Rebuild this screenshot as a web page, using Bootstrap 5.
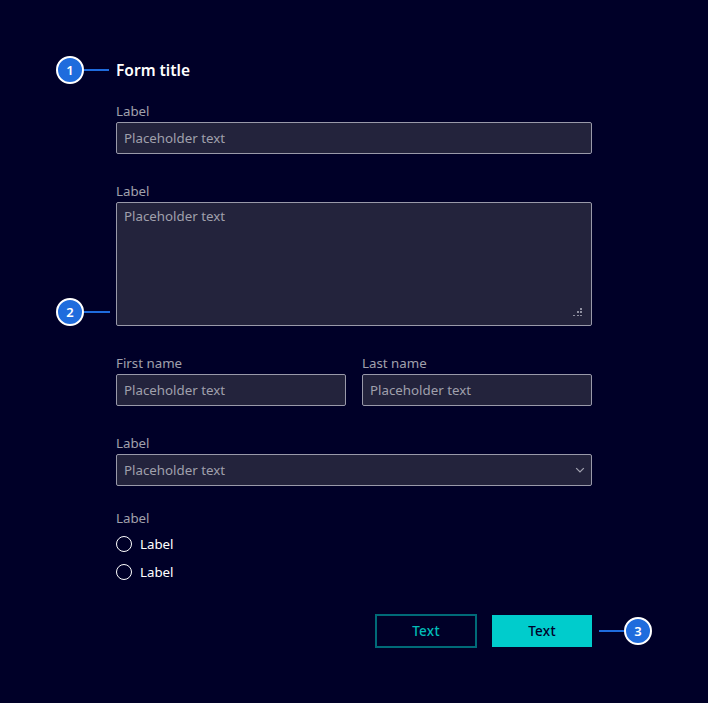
<!DOCTYPE html>
<html lang="en">
<head>
<meta charset="utf-8">
<meta name="viewport" content="width=device-width, initial-scale=1">
<title>Form</title>
<link href="https://cdn.jsdelivr.net/npm/bootstrap@5.3.0/dist/css/bootstrap.min.css" rel="stylesheet">
<style>
body{background:#000028;color:#fff;font-family:"Noto Sans",sans-serif;font-size:13.3px;line-height:18px;overflow:hidden}
.sheet{width:476px;margin-left:116px;padding-top:58px}
.form-heading{font-size:15.5px;line-height:24px;font-weight:600;letter-spacing:0;margin-bottom:20px}
.fields{gap:28px}
.form-label{display:block;color:#a0a0ac;margin-bottom:2px;line-height:18px}
.form-control,.form-select{background-color:#23233c;border:1px solid #9999a9;border-radius:2px;color:#a0a0ac;font-size:13.3px;line-height:18px;padding:6px 7px;height:32px}
.form-control::placeholder{color:#a0a0ac;opacity:1}
textarea.form-control{height:124px;resize:none;padding-top:4px;display:block}
.form-select{background-image:none;padding-left:7px}
.grip{right:10px;bottom:9px;pointer-events:none}
.chevron{right:7px;bottom:11px;pointer-events:none}
.choices{margin-top:23px}
.choices .form-label{margin-bottom:3px}
.choice{height:28px;gap:8px}
.choice .form-check-input{width:16px;height:16px;margin:0;background-color:transparent;border:1px solid #fff}
.actions{margin-top:28px;gap:15px}
.actions .btn{border-radius:0;font-size:13.5px;font-weight:500;line-height:18px;padding:0;letter-spacing:.25px}
.btn-line{width:102px;height:34px;border:2px solid #006a78;color:#00bdb8}
.btn-fill{width:100px;height:32px;border:0;background:#00cccc;color:#000028}
.callout{left:-60px;top:50%;transform:translateY(-50%)}
.callout-title{top:12px}
.callout-num{width:28px;height:28px;border:2px solid #fff;background:#1f6cdd;font-size:13px;font-weight:600;line-height:18px}
.callout-line{width:25px;height:2px;background:#1f6cdd}
.callout-area{top:110px}
.callout-area .callout-line{width:26px}
.callout-end{left:auto;right:-60px}
</style>
<script src="https://cdn.jsdelivr.net/npm/bootstrap@5.3.0/dist/js/bootstrap.bundle.min.js"></script>
</head>
<body>
<form class="sheet">
  <div class="position-relative">
    <h1 class="form-heading">Form title</h1>
    <div class="callout callout-title position-absolute d-flex align-items-center"><span class="callout-num rounded-circle d-flex align-items-center justify-content-center">1</span><span class="callout-line"></span></div>
  </div>
  <div class="fields d-flex flex-column">
    <div><label class="form-label" for="f1">Label</label><input id="f1" class="form-control" placeholder="Placeholder text"></div>
    <div>
      <label class="form-label" for="f2">Label</label>
      <div class="position-relative">
        <textarea id="f2" class="form-control" placeholder="Placeholder text"></textarea>
        <svg class="grip position-absolute" width="9" height="9" viewBox="0 0 9 9" fill="#9090a0" shape-rendering="crispEdges"><path d="M7 0h2v2H7zM7 3h2v2H7zM7 7h2v1H7zM4 3h2v2H4zM4 7h2v1H4zM0 7h2v1H0z"/></svg>
        <div class="callout callout-area position-absolute d-flex align-items-center"><span class="callout-num rounded-circle d-flex align-items-center justify-content-center">2</span><span class="callout-line"></span></div>
      </div>
    </div>
    <div class="row gx-3">
      <div class="col-6"><label class="form-label" for="f3">First name</label><input id="f3" class="form-control" placeholder="Placeholder text"></div>
      <div class="col-6"><label class="form-label" for="f4">Last name</label><input id="f4" class="form-control" placeholder="Placeholder text"></div>
    </div>
    <div class="position-relative">
      <label class="form-label" for="f5">Label</label>
      <select id="f5" class="form-select"><option>Placeholder text</option></select>
      <svg class="chevron position-absolute" width="10" height="10" viewBox="0 0 10 10" fill="none" stroke="#a0a0ae" stroke-width="1.3"><path d="M1.2 3.1 5 6.9 8.8 3.1"/></svg>
    </div>
  </div>
  <div class="choices">
    <span class="form-label">Label</span>
    <label class="choice d-flex align-items-center"><input class="form-check-input" type="radio" name="choice">Label</label>
    <label class="choice d-flex align-items-center"><input class="form-check-input" type="radio" name="choice">Label</label>
  </div>
  <div class="actions d-flex align-items-center justify-content-end position-relative">
    <button type="button" class="btn btn-line">Text</button>
    <button type="button" class="btn btn-fill">Text</button>
    <div class="callout callout-end position-absolute d-flex align-items-center"><span class="callout-line"></span><span class="callout-num rounded-circle d-flex align-items-center justify-content-center">3</span></div>
  </div>
</form>
</body>
</html>
